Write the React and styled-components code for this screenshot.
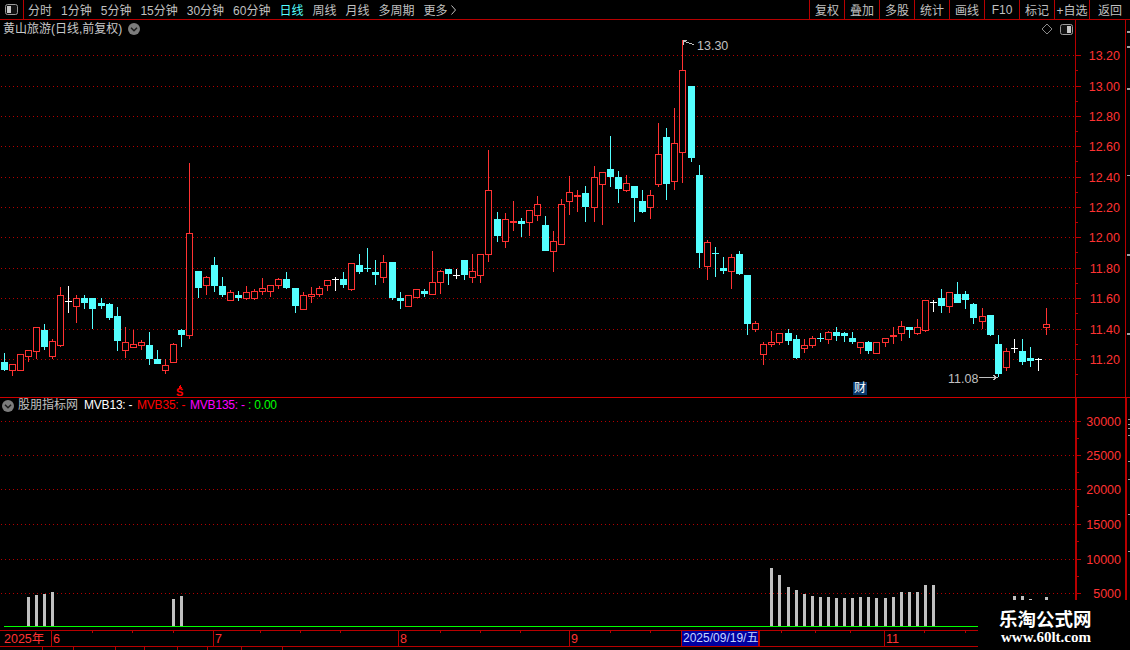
import React from "react";
import styled, { createGlobalStyle } from "styled-components";

const RED = "#ff3232";
const CYAN = "#54ffff";
const LINE = "#b80000";
const GRID = "#b40000";
const GRAY = "#c0c0c0";
const FONT = '"Liberation Sans", "Noto Sans CJK SC", sans-serif';

// type, high, body top, body bottom, low (all page pixels)
const CANDLES = [
  ["c", 353, 362, 370, 371], ["r", 364, 364, 371, 376], ["r", 354, 354, 371, 371], ["r", 350, 350, 357, 362],
  ["r", 327, 327, 352, 359], ["c", 324, 330, 347, 350], ["r", 339, 341, 357, 359], ["r", 287, 295, 346, 347],
  ["w", 286, 301, 302, 313], ["r", 295, 298, 307, 323], ["c", 295, 298, 303, 309], ["c", 298, 298, 309, 329],
  ["c", 298, 303, 306, 309], ["c", 303, 304, 318, 320], ["c", 307, 316, 341, 351], ["r", 327, 342, 351, 358],
  ["r", 330, 344, 348, 348], ["r", 340, 342, 346, 350], ["c", 332, 345, 359, 365], ["c", 350, 359, 364, 364],
  ["r", 359, 365, 371, 374], ["r", 343, 344, 363, 363], ["c", 329, 330, 335, 347], ["r", 163, 233, 336, 339],
  ["c", 271, 271, 288, 298], ["r", 276, 277, 286, 295], ["c", 257, 265, 286, 292], ["c", 277, 286, 295, 297],
  ["r", 290, 292, 301, 301], ["c", 291, 295, 298, 301], ["r", 286, 292, 299, 300], ["r", 289, 291, 299, 300],
  ["r", 278, 288, 292, 295], ["r", 285, 285, 292, 297], ["r", 278, 279, 286, 289], ["c", 272, 279, 288, 289],
  ["c", 288, 288, 306, 313], ["r", 292, 295, 310, 310], ["r", 287, 294, 297, 303], ["r", 286, 288, 295, 297],
  ["r", 280, 280, 286, 291], ["w", 277, 279, 280, 291], ["c", 272, 279, 285, 288], ["r", 263, 263, 290, 291],
  ["c", 254, 265, 272, 274], ["c", 248, 268, 269, 272], ["c", 260, 272, 275, 285], ["r", 255, 262, 278, 283],
  ["c", 262, 262, 298, 300], ["c", 292, 298, 301, 309], ["r", 295, 295, 307, 307], ["r", 289, 289, 298, 298],
  ["c", 289, 291, 294, 297], ["r", 251, 282, 295, 295], ["r", 270, 271, 283, 294], ["c", 269, 269, 274, 285],
  ["w", 269, 275, 276, 279], ["c", 260, 260, 275, 280], ["r", 254, 271, 278, 283], ["r", 254, 254, 276, 283],
  ["r", 150, 190, 255, 262], ["c", 212, 219, 236, 242], ["r", 213, 219, 242, 248], ["f", 201, 221, 223, 231],
  ["c", 218, 221, 224, 237], ["r", 210, 210, 223, 236], ["r", 196, 204, 216, 221], ["c", 216, 225, 251, 251],
  ["r", 231, 241, 252, 272], ["r", 199, 204, 245, 245], ["r", 176, 192, 202, 215], ["f", 190, 195, 197, 212],
  ["c", 186, 193, 207, 222], ["r", 166, 177, 208, 222], ["r", 172, 172, 185, 225], ["c", 136, 169, 177, 187],
  ["c", 171, 177, 189, 203], ["r", 175, 183, 191, 192], ["c", 186, 186, 198, 222], ["c", 190, 201, 212, 213],
  ["r", 190, 195, 208, 219], ["r", 123, 154, 185, 187], ["c", 128, 137, 184, 200], ["r", 108, 143, 182, 190],
  ["r", 40, 70, 153, 183], ["c", 86, 86, 158, 162], ["c", 165, 175, 253, 268], ["r", 240, 242, 267, 280],
  ["c", 247, 253, 254, 277], ["c", 257, 268, 271, 274], ["r", 254, 257, 272, 289], ["c", 251, 254, 274, 275],
  ["c", 275, 275, 324, 335], ["r", 321, 323, 330, 332], ["r", 342, 344, 355, 365], ["r", 331, 342, 345, 347],
  ["r", 333, 333, 343, 345], ["c", 329, 333, 341, 345], ["c", 335, 339, 358, 359], ["r", 339, 345, 349, 353],
  ["r", 336, 338, 346, 348], ["c", 333, 338, 339, 342], ["r", 331, 332, 340, 344], ["c", 327, 332, 336, 341],
  ["c", 332, 333, 336, 342], ["c", 332, 338, 342, 344], ["r", 342, 342, 348, 354], ["c", 341, 342, 351, 354],
  ["r", 342, 342, 354, 354], ["r", 338, 338, 343, 347], ["f", 327, 335, 337, 344], ["r", 321, 326, 334, 341],
  ["c", 327, 327, 330, 338], ["r", 319, 327, 334, 335], ["r", 300, 300, 331, 332], ["w", 300, 302, 303, 312],
  ["c", 289, 298, 306, 313], ["r", 292, 292, 307, 313], ["c", 282, 294, 303, 303], ["c", 291, 294, 300, 309],
  ["c", 303, 304, 318, 324], ["r", 308, 316, 322, 329], ["c", 315, 315, 335, 336], ["c", 335, 344, 374, 377],
  ["r", 348, 351, 368, 371], ["w", 339, 348, 349, 353], ["c", 339, 351, 362, 365], ["c", 347, 358, 361, 367],
  ["w", 358, 359, 360, 371], ["r", 308, 324, 328, 335],
];

const JUMPS = [12, 24, 36, 48, 61, 73, 85, 97, 109, 121];
const xOf = (i) => 4 + 8 * i + JUMPS.filter((j) => j <= i).length;

// candle index, top of bar
const VOLUMES = [
  [3, 597], [4, 595], [5, 594], [6, 592], [21, 599], [22, 596],
  [95, 568], [96, 575], [97, 587], [98, 590], [99, 594], [100, 596], [101, 597], [102, 597],
  [103, 598], [104, 598], [105, 598], [106, 597], [107, 597], [108, 598], [109, 598], [110, 597],
  [111, 592], [112, 592], [113, 592], [114, 585], [115, 585],
  [125, 596], [126, 596], [127, 599], [129, 597],
];

const PRICES = [
  ["13.20", 55], ["13.00", 86], ["12.80", 116], ["12.60", 146], ["12.40", 177], ["12.20", 207],
  ["12.00", 237], ["11.80", 268], ["11.60", 298], ["11.40", 329], ["11.20", 359],
];
const VOLUME_LEVELS = [
  ["30000", 421], ["25000", 455], ["20000", 489], ["15000", 524], ["10000", 559], ["5000", 593],
];
const MONTHS = [["6", 51], ["7", 213], ["8", 398], ["9", 569], ["", 759], ["11", 884]];
const MINOR_TICKS = [92, 132, 173, 260, 300, 340, 440, 480, 520, 610, 650, 781, 815, 850, 924, 965];
const PERIODS = ["分时", "1分钟", "5分钟", "15分钟", "30分钟", "60分钟", "日线", "周线", "月线", "多周期"];
const ACTIONS = ["复权", "叠加", "多股", "统计", "画线", "F10", "标记", "+自选", "返回"];
const TAB_WIDTHS = [43, 31, 42, 29, 33, 30, 34, 41];

const GlobalStyle = createGlobalStyle`
  html, body {
    margin: 0;
    background: #000;
  }
`;

const Page = styled.div`
  position: relative;
  width: 1130px;
  height: 650px;
  overflow: hidden;
  display: flex;
  flex-direction: column;
  background: #000;
  color: ${GRAY};
  font-family: ${FONT};
  font-size: 12px;
`;

const Toolbar = styled.div`
  box-sizing: border-box;
  height: 20px;
  flex: none;
  display: flex;
  align-items: center;
  border-bottom: 1px solid ${LINE};
`;

const ToggleCell = styled.div`
  box-sizing: border-box;
  width: 24px;
  height: 19px;
  display: flex;
  align-items: center;
  padding-left: 5px;
  border-right: 1px solid ${LINE};
`;

const Periods = styled.div`
  display: flex;
  align-items: center;
  gap: 9px;
  margin-left: 4px;
`;

const Period = styled.span`
  color: ${(p) => (p.$active ? CYAN : GRAY)};
  white-space: nowrap;
`;

const More = styled(Period)`
  display: flex;
  align-items: center;
  gap: 3px;
`;

const Actions = styled.div`
  display: flex;
  margin-left: auto;
  height: 19px;
`;

const Action = styled.div`
  box-sizing: border-box;
  width: ${(p) => (p.$last ? 41 : 35)}px;
  display: flex;
  align-items: center;
  justify-content: center;
  white-space: nowrap;
  border-left: 1px solid ${LINE};
`;

const Pane = styled.div`
  position: relative;
  box-sizing: border-box;
  display: flex;
  flex: none;
  height: ${(p) => p.$height}px;
  border-top: ${(p) => (p.$divided ? "1px solid #d00000" : "none")};
`;

const Plot = styled.svg`
  display: block;
  width: 1075px;
  height: 100%;
  flex: none;
  shape-rendering: crispEdges;
`;

const Scale = styled.svg`
  display: block;
  box-sizing: border-box;
  flex: none;
  height: 100%;
  width: ${(p) => (p.$thick ? 52 : 51)}px;
  border-left: ${(p) => (p.$thick ? 2 : 1)}px solid ${LINE};
  border-right: ${(p) => (p.$thick ? 2 : 1)}px solid ${LINE};
  shape-rendering: crispEdges;
`;

const Sliver = styled.svg`
  display: block;
  flex: 1;
  height: 100%;
  shape-rendering: crispEdges;
`;

const ChartText = styled.text`
  font-family: ${FONT};
  font-size: ${(p) => p.$size || 12.5}px;
  font-weight: ${(p) => (p.$bold ? 700 : 400)};
  fill: ${(p) => p.$color || RED};
  shape-rendering: auto;
`;

const QuoteTitle = styled.div`
  position: absolute;
  left: 3px;
  top: 2px;
  display: flex;
  align-items: center;
  gap: 6px;
  color: #c8c8c8;
  line-height: 14px;
`;

const PaneTools = styled.div`
  position: absolute;
  left: 1041px;
  top: 3px;
  display: flex;
  align-items: center;
  gap: 7px;
`;

const Legend = styled.div`
  position: absolute;
  left: 2px;
  top: 0;
  height: 15px;
  display: flex;
  align-items: center;
  line-height: 15px;
  white-space: nowrap;
`;

const LegendName = styled.span`
  margin-left: 4px;
  width: 66px;
  color: ${GRAY};
`;

const LegendValue = styled.span`
  color: ${(p) => p.$color};
  width: ${(p) => p.$width}px;
  font-size: 12px;
  letter-spacing: -0.2px;
`;

const CaiBadge = styled.div`
  position: absolute;
  left: 853px;
  top: 362px;
  width: 14px;
  height: 13px;
  display: flex;
  align-items: center;
  justify-content: center;
  background: #08386c;
  color: #fff;
  font-size: 12px;
  line-height: 13px;
`;

const DateAxis = styled.div`
  position: relative;
  box-sizing: border-box;
  height: 17px;
  flex: none;
  border-top: 1px solid ${LINE};
  border-bottom: 1px solid ${LINE};
`;

const DateTrack = styled.svg`
  display: block;
  width: 1130px;
  height: 15px;
  shape-rendering: crispEdges;
`;

const DateCursor = styled.div`
  position: absolute;
  left: 681px;
  top: 0;
  box-sizing: border-box;
  width: 78px;
  height: 15px;
  padding-left: 1px;
  background: #0000a0;
  border-left: 1px solid ${LINE};
  border-right: 1px solid ${LINE};
  color: #c4d4ff;
  font-size: 12px;
  line-height: 15px;
  white-space: nowrap;
`;

const TabRow = styled.div`
  display: flex;
  flex: 1;
  min-height: 0;
`;

const Tab = styled.div`
  box-sizing: border-box;
  width: ${(p) => p.$width}px;
  border-right: 1px solid ${LINE};
`;

const Watermark = styled.div`
  position: absolute;
  left: 978px;
  top: 600px;
  width: 152px;
  height: 50px;
  background: #000;
  display: flex;
  flex-direction: column;
  padding: 6px 0 0 21px;
  box-sizing: border-box;
  color: #fff;
`;

const WatermarkTitle = styled.div`
  font-family: "Noto Sans CJK SC", sans-serif;
  font-size: 18.5px;
  font-weight: 700;
  line-height: 24px;
  white-space: nowrap;
`;

const WatermarkUrl = styled.div`
  margin-left: 2px;
  font-family: "Liberation Serif", serif;
  font-size: 15px;
  font-weight: 700;
  line-height: 14px;
  white-space: nowrap;
`;

const ToggleIcon = ({ side }) => (
  <svg width="13" height="11" viewBox="0 0 13 11">
    <rect x="0.5" y="0.5" width="12" height="10" rx="2" fill="#111" stroke="#9a9a9a" />
    <rect x={side === "left" ? 2 : 7} y="2" width="4" height="7" fill="#c8c8c8" />
  </svg>
);

const RoundChevron = () => (
  <svg width="12" height="12" viewBox="0 0 12 12">
    <circle cx="6" cy="6" r="6" fill="#7c7c7c" />
    <path d="M3 4.8 L6 7.8 L9 4.8" fill="none" stroke="#1c1c1c" strokeWidth="1.5" />
  </svg>
);

const Candle = ({ index, kind, high, top, bottom, low }) => {
  const x = xOf(index);
  const color = kind === "c" ? CYAN : kind === "w" ? "#fff" : RED;
  return (
    <g fill={color}>
      <rect x={x} y={high} width="1" height={Math.max(top - high, 0)} />
      <rect x={x} y={bottom} width="1" height={Math.max(low - bottom, 0)} />
      {kind === "r" ? (
        <rect
          x={x - 2.5}
          y={top + 0.5}
          width="6"
          height={bottom - top - 1}
          fill="#000"
          stroke={color}
        />
      ) : (
        <rect x={x - 3} y={top} width="7" height={bottom - top} />
      )}
    </g>
  );
};

const GridLines = ({ id, levels }) => (
  <>
    <defs>
      <pattern id={id} x="0" y="0" width="4" height="1" patternUnits="userSpaceOnUse">
        <rect x="1" y="0" width="1" height="1" fill={GRID} />
      </pattern>
    </defs>
    {levels.map(([label, y]) => (
      <rect key={label} x="0" y={y} width="1075" height="1" fill={`url(#${id})`} />
    ))}
  </>
);

const PriceChart = () => (
  <Plot viewBox="0 20 1075 377">
    <GridLines id="price-dots" levels={PRICES} />
    {CANDLES.map(([kind, high, top, bottom, low], i) => (
      <Candle key={i} index={i} kind={kind} high={high} top={top} bottom={bottom} low={low} />
    ))}
    <path d="M683.5 45V40.5H687M684 41.5L694 44.5" fill="none" stroke={GRAY} />
    <ChartText x="697" y="50" $color={GRAY}>13.30</ChartText>
    <ChartText x="948" y="383" $color={GRAY}>11.08</ChartText>
    <path d="M979 377.5H997M993 375L997 377.5L993 380" fill="none" stroke={GRAY} />
    <path d="M180.5 385L182.5 388H178.5Z" fill="#ff0000" />
    <ChartText x="176" y="396" $size={11} $bold $color="#ff0000">S</ChartText>
  </Plot>
);

const PriceScale = () => (
  <Scale viewBox="1076 20 49 377">
    {PRICES.map(([label, y]) => (
      <g key={label}>
        <rect x="1076" y={y} width="5" height="1" fill={LINE} />
        <rect x="1076" y={y + 15} width="2" height="1" fill={LINE} />
        <ChartText x="1120" y={y + 5} textAnchor="end">{label}</ChartText>
      </g>
    ))}
  </Scale>
);

const VolumeChart = () => (
  <Plot viewBox="0 398 1075 232">
    <GridLines id="volume-dots" levels={VOLUME_LEVELS} />
    {VOLUMES.map(([index, top]) => (
      <rect key={index} x={xOf(index) - 1} y={top} width="3" height={626 - top} fill={GRAY} />
    ))}
    <rect x="4" y="626" width="1071" height="1" fill="#00ff00" />
  </Plot>
);

const VolumeScale = () => (
  <Scale $thick viewBox="1077 398 48 232">
    {VOLUME_LEVELS.map(([label, y]) => (
      <g key={label}>
        <rect x="1077" y={y} width="4" height="1" fill={LINE} />
        <rect x="1077" y={y + 17} width="2" height="1" fill={LINE} />
        <ChartText x="1121" y={y + 5} textAnchor="end">{label}</ChartText>
      </g>
    ))}
  </Scale>
);

const EdgeMarks = ({ marks }) => (
  <Sliver viewBox="0 0 4 100" preserveAspectRatio="none">
    {marks.map((y) => (
      <rect key={y} x="1" y={y} width="3" height="0.5" fill="#a0a0a0" />
    ))}
  </Sliver>
);

const DateRuler = () => (
  <DateTrack viewBox="0 631 1130 15">
    <ChartText x="4" y="643">2025年</ChartText>
    {MONTHS.map(([label, x]) => (
      <g key={x}>
        <rect x={x} y="631" width="1" height="15" fill={LINE} />
        <ChartText x={x + 2} y="643">{label}</ChartText>
      </g>
    ))}
    {MINOR_TICKS.map((x) => (
      <rect key={x} x={x} y="631" width="1" height="2" fill={LINE} />
    ))}
  </DateTrack>
);

export default function App() {
  return (
    <Page>
      <GlobalStyle />
      <Toolbar>
        <ToggleCell>
          <ToggleIcon side="left" />
        </ToggleCell>
        <Periods>
          {PERIODS.map((name) => (
            <Period key={name} $active={name === "日线"}>{name}</Period>
          ))}
          <More>
            更多
            <svg width="5" height="10" viewBox="0 0 5 10">
              <path d="M0.5 0.5L4.5 5L0.5 9.5" fill="none" stroke={GRAY} />
            </svg>
          </More>
        </Periods>
        <Actions>
          {ACTIONS.map((name, i) => (
            <Action key={name} $last={i === ACTIONS.length - 1}>{name}</Action>
          ))}
        </Actions>
      </Toolbar>

      <Pane $height={377}>
        <PriceChart />
        <PriceScale />
        <EdgeMarks marks={[3, 7, 18, 41, 62, 83]} />
        <QuoteTitle>
          黄山旅游(日线,前复权)
          <RoundChevron />
        </QuoteTitle>
        <PaneTools>
          <svg width="12" height="12" viewBox="0 0 12 12">
            <path d="M6 1L11 6L6 11L1 6Z" fill="none" stroke="#8a8a8a" />
          </svg>
          <ToggleIcon side="right" />
        </PaneTools>
        <CaiBadge>财</CaiBadge>
      </Pane>

      <Pane $height={233} $divided>
        <VolumeChart />
        <VolumeScale />
        <EdgeMarks marks={[9, 11, 13, 16, 27, 35, 50, 66]} />
        <Legend>
          <RoundChevron />
          <LegendName>股朋指标网</LegendName>
          <LegendValue $color="#fff" $width={53}>MVB13: -</LegendValue>
          <LegendValue $color="#ff0000" $width={53}>MVB35: -</LegendValue>
          <LegendValue $color="#ff00ff" $width={58}>MVB135: -</LegendValue>
          <LegendValue $color="#00ff00" $width={40}>: 0.00</LegendValue>
        </Legend>
      </Pane>

      <DateAxis>
        <DateRuler />
        <DateCursor>2025/09/19/五</DateCursor>
      </DateAxis>

      <TabRow>
        {TAB_WIDTHS.map((width, i) => (
          <Tab key={i} $width={width} />
        ))}
      </TabRow>

      <Watermark>
        <WatermarkTitle>乐淘公式网</WatermarkTitle>
        <WatermarkUrl>www.60lt.com</WatermarkUrl>
      </Watermark>
    </Page>
  );
}
